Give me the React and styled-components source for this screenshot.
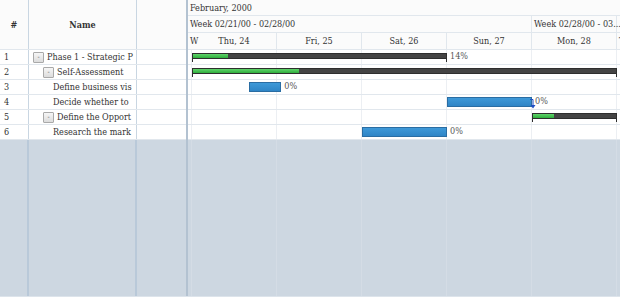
import React from "react";
import styled, { createGlobalStyle } from "styled-components";

const DAY = 85;
const START = 4; // partial "W" column before Thu, 24

const days = ["Thu, 24", "Fri, 25", "Sat, 26", "Sun, 27", "Mon, 28"];

// names as the grid shows them (the column cuts them short)
const tasks = [
  { id: 1, name: "Phase 1 - Strategic P", level: 0, parent: true, type: "summary", from: 0, to: 3, pct: 14 },
  { id: 2, name: "Self-Assessment", level: 1, parent: true, type: "summary", from: 0, to: 5, pct: 25 },
  { id: 3, name: "Define business vis", level: 2, type: "task", from: 0.67, to: 1.05, pct: 0 },
  { id: 4, name: "Decide whether to", level: 2, type: "task", from: 3, to: 4, pct: 0, link: true },
  { id: 5, name: "Define the Opport", level: 1, parent: true, type: "summary", from: 4, to: 5, pct: 25 },
  { id: 6, name: "Research the mark", level: 2, type: "task", from: 2, to: 3, pct: 0 },
];

const GlobalStyle = createGlobalStyle`
  html, body {
    margin: 0;
    padding: 0;
    background: #fff;
  }
  body {
    font-family: "DejaVu Serif Condensed", "DejaVu Serif", "Liberation Serif", serif;
    font-stretch: condensed;
    font-size: 9px;
    color: #333;
  }
`;

const Gantt = styled.div`
  display: flex;
  width: 620px;
  height: 296px;
  background: #cdd7e1;
  border-bottom: 1px solid #dde4eb;
  overflow: hidden;
`;

const Grid = styled.div`
  display: flex;
  flex-direction: column;
  width: 186px;
  flex-shrink: 0;
`;

const GridRow = styled.div`
  display: grid;
  grid-template-columns: 29px 108px 49px;
  height: ${({ $h }) => $h}px;
  background: ${({ $head }) => ($head ? "#fbfbfb" : "#fff")};
  border-bottom: 1px solid #e1e7ed;
  box-sizing: border-box;
`;

const Cell = styled.div`
  display: flex;
  align-items: center;
  justify-content: ${({ $center }) => ($center ? "center" : "flex-start")};
  padding-left: ${({ $pad }) => $pad || 0}px;
  border-right: 1px solid #c9d6e2;
  font-weight: ${({ $bold }) => ($bold ? "bold" : "normal")};
  white-space: nowrap;
  overflow: hidden;
  color: #333;
  &:last-child {
    border-right: none;
  }
`;

const Expander = styled.span`
  display: inline-flex;
  align-items: center;
  justify-content: center;
  width: 9px;
  height: 9px;
  margin-right: 3px;
  flex-shrink: 0;
  border: 1px solid #a9a9a9;
  border-radius: 1px;
  background: linear-gradient(#f6f6f6, #dcdcdc);
  font-size: 7px;
  line-height: 1;
  color: #555;
`;

const Filler = styled.div`
  flex: 1;
  display: grid;
  grid-template-columns: 29px 108px 49px;
  & > div {
    border-right: 2px solid #b9c9d9;
  }
  & > div:last-child {
    border-right: none;
  }
`;

const Splitter = styled.div`
  width: 2px;
  flex-shrink: 0;
  background: #b3c2d1;
`;

const Timeline = styled.div`
  position: relative;
  flex: 1;
  display: flex;
  flex-direction: column;
  overflow: hidden;
`;

const HeadRow = styled.div`
  display: flex;
  height: ${({ $h }) => $h}px;
  background: #fbfbfb;
  border-bottom: 1px solid #e1e7ed;
  box-sizing: border-box;
`;

const HeadCell = styled.div`
  flex: 0 0 ${({ $w }) => $w}px;
  min-width: 0;
  display: flex;
  align-items: center;
  justify-content: ${({ $center }) => ($center ? "center" : "flex-start")};
  padding-left: ${({ $center }) => ($center ? 0 : 2)}px;
  box-sizing: border-box;
  border-right: 1px solid ${({ $noLine }) => ($noLine ? "transparent" : "#e1e7ed")};
  white-space: nowrap;
  overflow: visible;
  color: #333;
`;

const Lane = styled.div`
  position: relative;
  height: 15px;
  background: #fff;
  border-bottom: 1px solid #e1e7ed;
  box-sizing: border-box;
`;

const Columns = styled.div`
  position: absolute;
  inset: 0;
  display: flex;
  pointer-events: none;
`;

const ColLine = styled.div`
  flex: 0 0 ${({ $w }) => $w}px;
  border-right: 1px solid ${({ $dark }) => ($dark ? "#d4dce5" : "#eceff3")};
  box-sizing: border-box;
`;

const Body = styled.div`
  position: relative;
  flex: 1;
  display: flex;
  flex-direction: column;
`;

const Rest = styled.div`
  position: relative;
  flex: 1;
`;

const SummaryBar = styled.div`
  position: absolute;
  top: 3px;
  height: 6px;
  background: #444;
  border: 1px solid #2e2e2e;
  box-sizing: border-box;
  &::before,
  &::after {
    content: "";
    position: absolute;
    top: 3px;
    width: 1px;
    height: 5px;
    background: #2e2e2e;
  }
  &::before {
    left: -1px;
  }
  &::after {
    right: -1px;
  }
`;

const Progress = styled.div`
  height: 100%;
  background: linear-gradient(#5fd36a, #2fae3d);
`;

const TaskBar = styled.div`
  position: absolute;
  top: 2px;
  height: 10px;
  background: linear-gradient(#3e99d8, #2f85c6);
  border: 1px solid #2a6da3;
  box-sizing: border-box;
`;

const Label = styled.span`
  position: absolute;
  top: 1px;
  color: #555;
  white-space: nowrap;
`;

const LinkMark = styled.svg`
  position: absolute;
  top: 4px;
  z-index: 1;
`;

const x = (d) => START + d * DAY;

const colWidths = [START, ...days.map(() => DAY), 60];

const GridLines = ({ dark }) => (
  <Columns>
    {colWidths.map((w, i) => (
      <ColLine key={i} $w={w} $dark={dark} />
    ))}
  </Columns>
);

const TaskLane = ({ t }) => {
  const left = x(t.from);
  const width = x(t.to) - left;
  return (
    <Lane>
      <GridLines />
      {t.type === "summary" ? (
        <SummaryBar style={{ left, width }}>
          <Progress style={{ width: `${t.pct}%` }} />
        </SummaryBar>
      ) : (
        <TaskBar style={{ left, width }} />
      )}
      {x(t.to) < 420 || t.type === "task" ? (
        <Label style={{ left: left + width + 3 }}>{t.pct}%</Label>
      ) : null}
      {t.link && (
        <LinkMark style={{ left: left + width - 2 }} width="6" height="11" viewBox="0 0 6 11">
          <path d="M0 0.5 L3 0.5 L3 7" stroke="#1f4fc4" strokeWidth="1" fill="none" />
          <path d="M0.5 6 L5.5 6 L3 9.5 Z" fill="#1f4fc4" />
        </LinkMark>
      )}
    </Lane>
  );
};

export default function App() {
  return (
    <>
      <GlobalStyle />
      <Gantt>
        <Grid>
          <GridRow $head $h={50}>
            <Cell $center $bold>#</Cell>
            <Cell $center $bold>Name</Cell>
            <Cell />
          </GridRow>
          {tasks.map((t) => (
            <GridRow key={t.id} $h={15}>
              <Cell $pad={4}>{t.id}</Cell>
              <Cell $pad={4 + t.level * 10}>
                {t.parent && <Expander>-</Expander>}
                {t.name}
              </Cell>
              <Cell />
            </GridRow>
          ))}
          <Filler>
            <div />
            <div />
            <div />
          </Filler>
        </Grid>
        <Splitter />
        <Timeline>
          <HeadRow $h={16}>
            <HeadCell $w={432} $noLine>February, 2000</HeadCell>
          </HeadRow>
          <HeadRow $h={17}>
            <HeadCell $w={START + DAY * 4}>Week 02/21/00 - 02/28/00</HeadCell>
            <HeadCell $w={85}>Week 02/28/00 - 03...</HeadCell>
          </HeadRow>
          <HeadRow $h={17}>
            <HeadCell $w={START} $noLine>W</HeadCell>
            {days.map((d) => (
              <HeadCell key={d} $w={DAY} $center>
                {d}
              </HeadCell>
            ))}
            <HeadCell $w={4}>T</HeadCell>
          </HeadRow>
          <Body>
            {tasks.map((t) => (
              <TaskLane key={t.id} t={t} />
            ))}
            <Rest>
              <GridLines dark />
            </Rest>
          </Body>
        </Timeline>
      </Gantt>
    </>
  );
}
